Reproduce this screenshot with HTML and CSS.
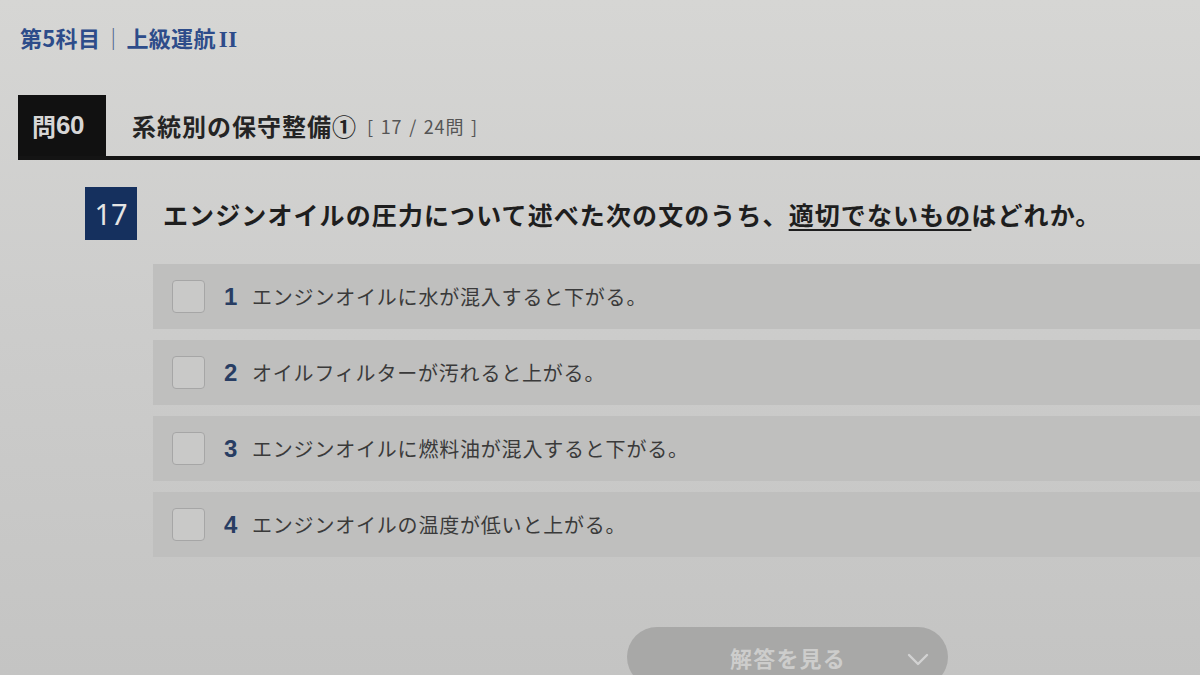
FILE: index.html
```html
<!DOCTYPE html>
<html lang="ja">
<head>
<meta charset="utf-8">
<title>第5科目 上級運航II</title>
<link rel="stylesheet" href="styles.css">
</head>
<body>
<div class="page">
  <div class="subject">第5科目<span class="sep">｜</span>上級運航<span class="roman">II</span></div>

  <div class="section-head">
    <div class="tab">問<span class="tabnum">60</span></div>
    <div class="section-title">系統別の保守整備①<span class="count">[ 17 / 24問 ]</span></div>
  </div>

  <div class="question">
    <div class="qnum">17</div>
    <div class="qtext">エンジンオイルの圧力について述べた次の文のうち、<span class="ul">適切でないもの</span>はどれか。</div>
  </div>

  <ul class="options">
    <li class="option"><span class="check"></span><span class="onum">1</span><span class="otext">エンジンオイルに水が混入すると下がる。</span></li>
    <li class="option"><span class="check"></span><span class="onum">2</span><span class="otext">オイルフィルターが汚れると上がる。</span></li>
    <li class="option"><span class="check"></span><span class="onum">3</span><span class="otext">エンジンオイルに燃料油が混入すると下がる。</span></li>
    <li class="option"><span class="check"></span><span class="onum">4</span><span class="otext">エンジンオイルの温度が低いと上がる。</span></li>
  </ul>

  <div class="actions">
    <button class="answer-btn"><span class="btn-label">解答を見る</span><svg class="chev" width="22" height="14" viewBox="0 0 22 14"><path d="M2 2 L11 11 L20 2" fill="none" stroke="#d2d2d2" stroke-width="2.4" stroke-linecap="round" stroke-linejoin="round"/></svg></button>
  </div>
</div>
</body>
</html>
```

FILE: styles.css
```css
html, body {
  margin: 0;
  padding: 0;
}
body {
  width: 1200px;
  height: 675px;
  overflow: hidden;
  background: linear-gradient(180deg, #d6d6d4 0%, #cccccb 50%, #c4c4c3 100%);
  font-family: "Noto Sans CJK JP", "Noto Sans", sans-serif;
  color: #222;
}
.page {
  padding-left: 18px;
}
.subject {
  padding-top: 23px;
  padding-left: 2px;
  font-size: 22px;
  line-height: 28px;
  font-weight: 700;
  color: #2d4c8a;
  letter-spacing: 0.3px;
}
.subject .sep {
  color: #4a5f8a;
  font-weight: 400;
  margin: 0 2px;
}
.subject .roman {
  font-family: "Liberation Serif", "Times New Roman", serif;
  font-size: 23px;
  margin-left: 3px;
  letter-spacing: 0.5px;
}
.section-head {
  margin-top: 41px;
  display: flex;
  align-items: center;
  border-bottom: 4px solid #141414;
  height: 61px;
}
.tab {
  background: #111;
  color: #d6d6d6;
  width: 88px;
  height: 61px;
  box-sizing: border-box;
  padding-left: 14px;
  display: flex;
  align-items: center;
  font-size: 24px;
  font-weight: 700;
}
.tabnum {
  font-family: "Liberation Sans", Arial, sans-serif;
  font-size: 26px;
  letter-spacing: -0.5px;
}
.section-title {
  margin-left: 26px;
  font-size: 24px;
  font-weight: 700;
  color: #242424;
  display: flex;
  align-items: center;
  letter-spacing: 1px;
}
.count {
  margin-left: 10px;
  font-size: 18px;
  font-weight: 400;
  color: #555;
  letter-spacing: 0.8px;
  word-spacing: 2px;
}
.question {
  display: flex;
  align-items: center;
  margin-top: 27px;
  padding-left: 67px;
}
.qnum {
  width: 52px;
  height: 53px;
  background: #15305e;
  color: #e4e4e4;
  display: flex;
  align-items: center;
  justify-content: center;
  font-family: "Noto Sans", sans-serif;
  font-size: 29px;
  font-weight: 400;
}
.qtext {
  margin-left: 26px;
  font-size: 25px;
  font-weight: 700;
  color: #1e1e1e;
  letter-spacing: 1.1px;
}
.ul {
  text-decoration: underline;
  text-decoration-thickness: 2px;
  text-underline-offset: 4px;
}
.options {
  list-style: none;
  margin: 24px 0 0 135px;
  padding: 0;
  display: flex;
  flex-direction: column;
  gap: 11px;
}
.option {
  height: 65px;
  background: #bfbfbe;
  display: flex;
  align-items: center;
  padding-left: 19px;
}
.check {
  width: 33px;
  height: 33px;
  box-sizing: border-box;
  border: 1px solid #a6a6a6;
  border-radius: 4px;
  background: #c9c9c8;
}
.onum {
  margin-left: 19px;
  width: 15px;
  font-family: "Liberation Sans", Arial, sans-serif;
  font-size: 24px;
  font-weight: 700;
  color: #283d63;
}
.otext {
  margin-left: 13px;
  font-size: 20px;
  color: #3a3a3a;
  letter-spacing: 0.8px;
}
.actions {
  margin-top: 70px;
  padding-left: 609px;
}
.answer-btn {
  width: 321px;
  height: 60px;
  border: none;
  border-radius: 30px;
  background: #a8a8a7;
  display: flex;
  align-items: center;
  padding: 0 18px 0 103px;
  box-sizing: border-box;
  font-family: "Noto Sans CJK JP", sans-serif;
}
.btn-label {
  font-size: 22px;
  font-weight: 700;
  color: #cdcdcc;
  letter-spacing: 1.2px;
  line-height: 26px;
  margin-top: 0;
}
.chev {
  margin-left: auto;
  margin-right: 1px;
  margin-top: 6px;
}
```
